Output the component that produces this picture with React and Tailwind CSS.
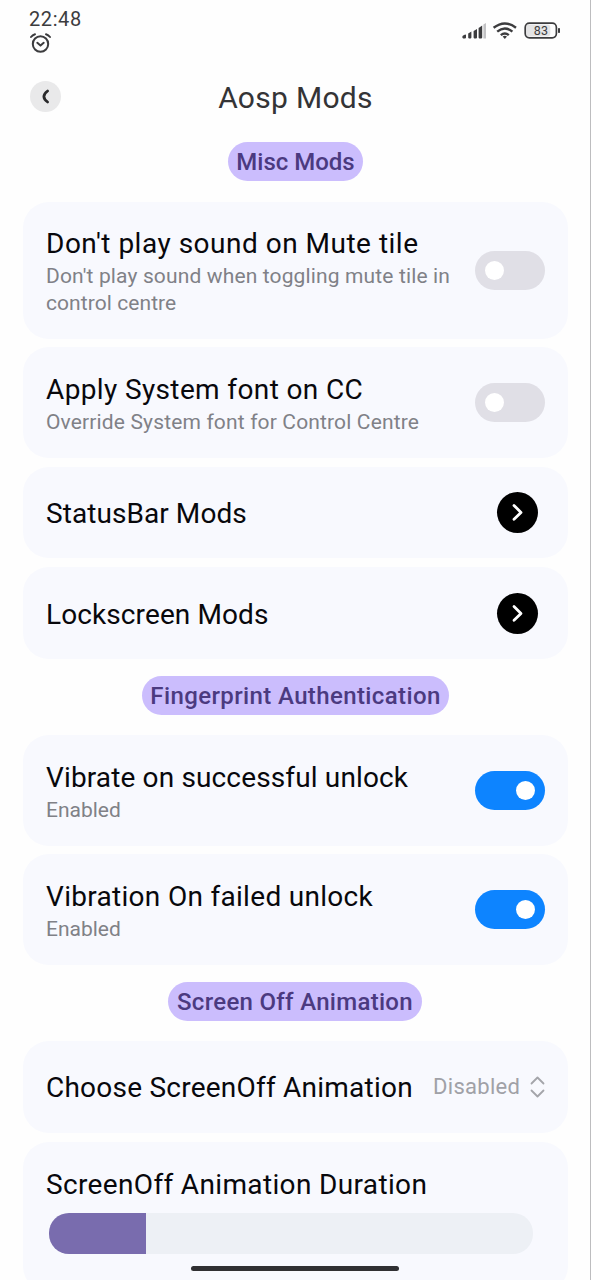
function Toggle({ on }) {
  return (
    <span
      role="switch"
      aria-checked={on}
      className={
        on
          ? 'flex h-[39px] w-[70px] shrink-0 items-center justify-end rounded-[20px] bg-[#0d84ff] pr-[10px]'
          : 'flex h-[39px] w-[70px] shrink-0 items-center justify-start rounded-[20px] bg-[#e0dfe6] pl-[9.5px]'
      }
    >
      <span className="size-[19px] rounded-full bg-white" />
    </span>
  );
}

function Card({ className, children }) {
  return (
    <section className={`flex shrink-0 items-center justify-between rounded-[26px] bg-[#f8f9fe] pr-[23px] pl-[23px] ${className}`}>
      {children}
    </section>
  );
}

function Title({ className, children }) {
  return <h2 className={`pt-[3px] text-[28px] leading-[34px] whitespace-nowrap text-[#08080c] ${className}`}>{children}</h2>;
}

function Note({ className, children }) {
  return <p className={`text-[21px] leading-[27px] whitespace-nowrap text-[#808187] ${className}`}>{children}</p>;
}

function Pill({ className, children }) {
  return (
    <div className={`flex h-[39px] shrink-0 items-center justify-center self-center rounded-full bg-[#cbbdfd] pt-[2px] text-[24px] leading-[37px] font-medium whitespace-nowrap text-[#4b3a80] ${className}`}>
      {children}
    </div>
  );
}

function ArrowButton() {
  return (
    <span className="mr-[7px] flex size-[41px] shrink-0 items-center justify-center rounded-full bg-black">
      <svg width="41" height="41" viewBox="0 0 41 41" fill="none" stroke="white" strokeWidth="2.8" strokeLinecap="round" strokeLinejoin="round">
        <path d="M17 13.4 L24 20.4 L17 27.2" />
      </svg>
    </span>
  );
}

function StatusBar() {
  return (
    <header className="flex h-[61px] shrink-0 justify-between pt-[8px] pr-[29px] pl-[29px] text-[#3c3c3e]">
      <div className="flex flex-col">
        <span className="h-[24px] text-[20px] leading-[22px] tracking-[0.6px]">22:48</span>
        <svg className="ml-[1px]" width="21" height="21" viewBox="0 0 21 21" fill="none" stroke="currentColor" strokeWidth="2" strokeLinecap="round" strokeLinejoin="round">
          <circle cx="10.5" cy="12" r="7.7" />
          <path d="M1 5 Q2.6 3 5 2.2 M20 5 Q18.4 3 16 2.2 M7.3 10.8 L10.5 13.6 L13.7 10.8" />
        </svg>
      </div>
      <svg className="mt-[12px]" width="100" height="22" viewBox="0 0 100 22" fill="currentColor">
        <path d="M1.4 16.6 Q1.4 15.8 2.2 15.4 L4.2 14.5 Q5 14.4 5 15.2 V17.6 Q5 18.4 4.2 18.4 H2.2 Q1.4 18.4 1.4 17.6 Z" />
        <path d="M7.2 13.4 L10.4 11.6 V17.6 Q10.4 18.4 9.6 18.4 H8 Q7.2 18.4 7.2 17.6 Z" />
        <path d="M12.6 11 L16 9 V17.6 Q16 18.4 15.2 18.4 H13.4 Q12.6 18.4 12.6 17.6 Z" />
        <path d="M17.6 7.9 L21.2 5.6 V17.6 Q21.2 18.4 20.4 18.4 H18.4 Q17.6 18.4 17.6 17.6 Z" />
        <path d="M22.4 4.6 L25 3 V18.4 H22.4 Z" fill="#c2c2c4" />
        <g fill="none" stroke="currentColor" strokeWidth="2.4">
          <path d="M32.6 7.8 Q43.8 -1 55 7.8" />
          <path d="M36.2 11.6 Q43.8 5.2 51.4 11.6" />
          <path d="M39.8 15.2 Q43.8 11.8 47.8 15.2" />
        </g>
        <path d="M41.6 16.6 Q43.8 15 46 16.6 L43.8 19 Z" />
        <rect x="65.3" y="4.5" width="24" height="12" rx="3" fill="#e4e4e5" />
        <rect x="64.2" y="3.2" width="31.2" height="14.6" rx="4.2" fill="none" stroke="currentColor" strokeWidth="1.7" />
        <rect x="97" y="8" width="2" height="5" rx="0.8" />
        <text x="80" y="15" textAnchor="middle" fontSize="12.5" letterSpacing="0.3">83</text>
      </svg>
    </header>
  );
}

export default function App() {
  return (
    <div className="relative flex h-[1280px] w-[591px] flex-col overflow-hidden border-r border-[#bdbdbf] bg-[#fefefe] font-['Roboto',sans-serif]">
      <StatusBar />
      <div className="grid h-[71px] shrink-0 grid-cols-[62px_1fr_62px] items-center">
        <button className="ml-[30px] flex size-[31px] items-center justify-center rounded-full bg-[#e9e9ea]">
          <svg width="31" height="31" viewBox="0 0 31 31" fill="none" stroke="#29292b" strokeWidth="2.8" strokeLinecap="round">
            <path d="M17.6 10 Q10.2 15.5 17.6 21" />
          </svg>
        </button>
        <h1 className="pt-[2px] pl-[1px] text-center text-[30px] leading-[40px] tracking-[0.3px] text-[#343436]">Aosp Mods</h1>
      </div>
      <main className="flex flex-col pt-[10px] pr-[22px] pl-[23px]">
        <Pill className="w-[135px]">Misc Mods</Pill>
        <Card className="mt-[21px] h-[137px]">
          <div className="flex flex-col">
            <Title className="tracking-[0.5px]">Don't play sound on Mute tile</Title>
            <Note className="mt-[2px] tracking-[0.14px]">Don't play sound when toggling mute tile in</Note>
            <Note className="tracking-[0.07px]">control centre</Note>
          </div>
          <Toggle on={false} />
        </Card>
        <Card className="mt-[8px] h-[111px]">
          <div className="flex flex-col">
            <Title className="tracking-[0.37px]">Apply System font on CC</Title>
            <Note className="mt-[2px] tracking-[0.15px]">Override System font for Control Centre</Note>
          </div>
          <Toggle on={false} />
        </Card>
        <Card className="mt-[9px] h-[91px]">
          <Title className="tracking-[0.07px]">StatusBar Mods</Title>
          <ArrowButton />
        </Card>
        <Card className="mt-[9px] h-[92px]">
          <Title className="tracking-[0.1px]">Lockscreen Mods</Title>
          <ArrowButton />
        </Card>
        <Pill className="mt-[17px] w-[307px] tracking-[0.38px]">Fingerprint Authentication</Pill>
        <Card className="mt-[20px] h-[111px]">
          <div className="flex flex-col">
            <Title className="tracking-[0.14px]">Vibrate on successful unlock</Title>
            <Note className="mt-[2px]">Enabled</Note>
          </div>
          <Toggle on />
        </Card>
        <Card className="mt-[8px] h-[111px]">
          <div className="flex flex-col">
            <Title className="tracking-[0.3px]">Vibration On failed unlock</Title>
            <Note className="mt-[2px]">Enabled</Note>
          </div>
          <Toggle on />
        </Card>
        <Pill className="mt-[17px] mr-[1px] w-[254px] tracking-[0.3px]">Screen Off Animation</Pill>
        <Card className="mt-[20px] h-[92px] pb-[1px]">
          <Title className="tracking-[0.23px]">Choose ScreenOff Animation</Title>
          <div className="flex items-center">
            <span className="w-[97px] text-[22px] leading-[27px] tracking-[0.3px] whitespace-nowrap text-[#a0a1a7]">Disabled</span>
            <svg width="15" height="22" viewBox="0 0 15 22" fill="none" stroke="#a4a5aa" strokeWidth="1.8" strokeLinecap="round" strokeLinejoin="round">
              <path d="M1.5 7.5 L7.5 1.5 L13.5 7.5 M1.5 14.5 L7.5 20.5 L13.5 14.5" />
            </svg>
          </div>
        </Card>
        <section className="mt-[9px] flex h-[150px] shrink-0 flex-col rounded-[26px] bg-[#f8f9fe] pt-[23px] pl-[23px]">
          <Title className="tracking-[0.35px]">ScreenOff Animation Duration</Title>
          <div className="mt-[11px] ml-[3px] h-[41px] w-[484px] overflow-hidden rounded-[20px] bg-[#edf0f5]">
            <div className="h-full w-[97px] bg-[#796cae]" />
          </div>
        </section>
      </main>
      <div className="absolute top-[1266px] left-[191px] h-[5px] w-[208px] rounded-full bg-[#303033]" />
    </div>
  );
}
